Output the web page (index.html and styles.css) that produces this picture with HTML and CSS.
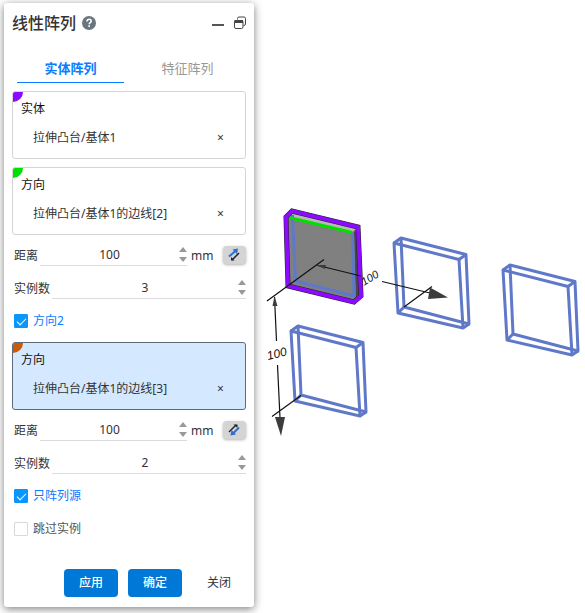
FILE: index.html
```
<!DOCTYPE html>
<html lang="zh-CN">
	<head>
		<meta charset="UTF-8">
		<title>线性阵列</title>
		<link rel="stylesheet" href="styles.css">
	</head>
	<body>
		<div class="app">
			<form class="panel">
				<div class="header">
					<h1>线性阵列</h1>
					<button type="button" class="icon-btn help" aria-label="帮助">
						<svg width="14" height="14" viewBox="0 0 14 14"><circle cx="7" cy="7" r="7" fill="#6b7580"/><path d="M5 5.4C5 4 6 3.3 7.1 3.3S9.2 4 9.2 5.2C9.2 6.6 7.2 6.7 7.2 8.3" fill="none" stroke="#fff" stroke-width="1.6"/><rect x="6.3" y="9.3" width="1.7" height="1.6" fill="#fff"/></svg>
					</button>
					<button type="button" class="icon-btn min" aria-label="最小化">
						<svg width="12" height="14" viewBox="0 0 12 14"><path d="M0 9h12" stroke="#555" stroke-width="2"/></svg>
					</button>
					<button type="button" class="icon-btn" aria-label="还原">
						<svg width="12" height="14" viewBox="0 0 12 14" fill="none" stroke="#444"><path d="M3.5 3.5V2.5Q3.500 1 5 1H10Q11.500 1 11.500 2.500V8Q11.500 9.500 9.500 9.500"/><rect x=".5" y="4.500" width="8.500" height="8" rx="1.500"/><path d="M.5 5.500h8.500" stroke-width="3"/></svg>
					</button>
				</div>
				<div class="tabs">
					<button type="button" class="tab active">实体阵列</button>
					<button type="button" class="tab">特征阵列</button>
				</div>

				<div class="pick">
					<span class="mark purple"></span>
					<div class="pick-title">实体</div>
					<div class="pick-item"><span>拉伸凸台/基体1</span><button type="button" class="del" aria-label="删除">×</button></div>
				</div>
				<div class="pick">
					<span class="mark green"></span>
					<div class="pick-title">方向</div>
					<div class="pick-item"><span>拉伸凸台/基体1的边线[2]</span><button type="button" class="del" aria-label="删除">×</button></div>
				</div>

				<div class="fields">
					<div class="row">
						<label for="dist1">距离</label>
						<div class="num">
							<input type="text" id="dist1" value="100">
							<span class="spin"><button type="button" class="up" aria-label="增加"></button><button type="button" class="down" aria-label="减少"></button></span>
						</div>
						<span class="unit">mm</span>
						<button type="button" class="flip" aria-label="反向">
							<svg width="13" height="14" viewBox="0 0 13 14"><path d="M1 8.500L7.500 3" stroke="#2a6fd0" stroke-width="2"/><path d="M4.500 1.500L10 .5L9 6z" fill="#2a6fd0"/><path d="M11 5L4 12" stroke="#222" stroke-width="1.500"/><path d="M3 9V12.500H6.500z" fill="#222"/></svg>
						</button>
					</div>
					<div class="row">
						<label for="count1">实例数</label>
						<div class="num">
							<input type="text" id="count1" value="3">
							<span class="spin"><button type="button" class="up" aria-label="增加"></button><button type="button" class="down" aria-label="减少"></button></span>
						</div>
					</div>
					<label class="check"><input type="checkbox" checked><span>方向2</span></label>
				</div>

				<div class="pick current">
					<span class="mark orange"></span>
					<div class="pick-title">方向</div>
					<div class="pick-item"><span>拉伸凸台/基体1的边线[3]</span><button type="button" class="del" aria-label="删除">×</button></div>
				</div>

				<div class="fields">
					<div class="row">
						<label for="dist2">距离</label>
						<div class="num">
							<input type="text" id="dist2" value="100">
							<span class="spin"><button type="button" class="up" aria-label="增加"></button><button type="button" class="down" aria-label="减少"></button></span>
						</div>
						<span class="unit">mm</span>
						<button type="button" class="flip" aria-label="反向">
							<svg width="13" height="14" viewBox="0 0 13 14"><path d="M1 9L8 2" stroke="#222" stroke-width="1.500"/><path d="M5.500 1.500H9.500V5z" fill="#222"/><path d="M11 4.500L5.500 10" stroke="#2a6fd0" stroke-width="2"/><path d="M3.500 7L2.500 12.500L8 11.500z" fill="#2a6fd0"/></svg>
						</button>
					</div>
					<div class="row">
						<label for="count2">实例数</label>
						<div class="num">
							<input type="text" id="count2" value="2">
							<span class="spin"><button type="button" class="up" aria-label="增加"></button><button type="button" class="down" aria-label="减少"></button></span>
						</div>
					</div>
					<label class="check"><input type="checkbox" checked><span>只阵列源</span></label>
					<label class="check"><input type="checkbox"><span>跳过实例</span></label>
				</div>

				<div class="footer">
					<button type="button" class="btn primary">应用</button>
					<button type="button" class="btn primary">确定</button>
					<button type="button" class="btn">关闭</button>
				</div>
			</form>

			<svg class="view" viewBox="254 0 331 613" preserveAspectRatio="xMinYMin meet">
				<defs>
					<!-- 线框 -->
					<g id="frame" fill="none" stroke="#6078c8" stroke-width="3" stroke-linejoin="round">
						<path d="M0 0L65 16.500L69 85L4 70Z"/>
						<path d="M7 -5L72 11.500L75 81L10 64Z"/>
						<path d="M0 0L7 -5M65 16.500L72 11.500M69 85L75 81M4 70L10 64"/>
					</g>
				</defs>
				<!-- 源实体 -->
				<path d="M286 217L292 211L358 227L361 296L354 302L288 286Z" fill="#808080"/>
				<path d="M288 217L293 213L357 228L352 232Z" fill="#b8b8b8"/>
				<path d="M354 232L358 228L360 296L356 300Z" fill="#484848"/>
				<path d="M292.500 215L295.500 281L354 296M352.500 233L354 297" fill="none" stroke="#6078c8" stroke-width="3"/>
				<path d="M289 217.500L352 232.500" stroke="#00e000" stroke-width="3"/>
				<path d="M286 217L292 211L358 227L361 296L354 302L288 286Z" fill="none" stroke="#222" stroke-width="5"/>
				<path d="M286 217L292 211L358 227L361 296L354 302L288 286Z" fill="none" stroke="#8c0aff" stroke-width="4"/>
				<use href="#frame" x="394" y="243"/>
				<use href="#frame" x="503" y="270"/>
				<use href="#frame" x="291" y="331"/>
				<!-- 尺寸标注 -->
				<g stroke="#111" stroke-width="1.200" fill="none">
					<path d="M267 301L324 259.500M316 265L361 276M382 281.500L432 293.500M404 307L432 286.500"/>
					<path d="M274.500 297L276.500 341M277.500 365L280 418M272 416.500L301 395.500"/>
				</g>
				<g fill="#3c3c3c">
					<path d="M430 287.500L448 297.500L428 299Z"/>
					<path d="M275 417H285L281 436Z"/>
					<path d="M316 265L326 265L325 269Z"/>
					<path d="M274.500 296L272.500 306H277.500Z"/>
				</g>
				<text class="dim" transform="translate(268 360) rotate(-14)">100</text>
				<text class="dim small" transform="translate(364 286) rotate(-32)">100</text>
			</svg>
		</div>
	</body>
</html>
```
FILE: styles.css
```
* {margin: 0; padding: 0; box-sizing: border-box;}
body {
	background: #fff;
	color: #333;
	font: 12px/18px "Noto Sans", "Noto Sans CJK SC", sans-serif;
}
button, input {
	font: inherit;
	color: inherit;
	border: none;
	background: none;
}
button {cursor: pointer;}
.app {
	display: flex;
	align-items: flex-start;
}
.panel {
	flex: 0 0 250px;
	min-width: 0;
	margin: 3px 0 0 4px;
	padding: 0 8px 10px;
	background: #fff;
	border-radius: 3px;
	box-shadow: 0 2px 8px rgba(0, 0, 0, 0.5);
}
.view {
	flex: 1;
	min-width: 0;
	display: block;
}

.header {
	display: flex;
	align-items: center;
	height: 40px;
}
.header h1 {
	font-size: 16px;
	font-weight: 500;
}
.icon-btn {
	display: flex;
	margin-left: 10px;
}
.icon-btn.help {margin-left: 6px;}
.icon-btn.min {margin-left: auto;}

.tabs {
	display: flex;
	gap: 10px;
	padding: 10px 5px 8px;
}
.tab {
	flex: 1;
	height: 30px;
	font-size: 13px;
	color: #999;
	border-bottom: 1px solid transparent;
}
.tab.active {
	color: #0a7cff;
	font-weight: bold;
	border-color: #0a7cff;
}

.pick {
	position: relative;
	height: 68px;
	padding: 8px 8px 0;
	border: 1px solid #d4d4d4;
	border-radius: 3px;
	overflow: hidden;
}
.pick + .pick {margin-top: 8px;}
.pick.current {
	margin-top: 10px;
	background: #d4e9ff;
	border-color: #5f6b78;
}
.mark {
	position: absolute;
	left: 0; top: 0;
	width: 10px; height: 10px;
	border-bottom-right-radius: 10px;
}
.purple {background: #8c0aff;}
.green {background: #00e000;}
.orange {background: #c85a0a;}
.pick-title {color: #111;}
.pick-item {
	display: flex;
	justify-content: space-between;
	margin-top: 11px;
	padding: 0 12px;
}
.del {
	width: 9px;
	line-height: 18px;
}

.fields {
	display: flex;
	flex-direction: column;
	gap: 11px;
	padding: 9px 0 0 2px;
}
.row {
	display: flex;
	align-items: center;
	gap: 2px;
	height: 22px;
}
.row label {
	flex: none;
	padding-top: 2px;
}
.num {
	flex: 1;
	display: flex;
	min-width: 0;
	height: 22px;
	border-bottom: 1px solid #dcdce0;
}
.num input {
	flex: 1;
	width: 0;
	min-width: 0;
	text-align: center;
	outline: none;
}
.spin {
	display: flex;
	flex-direction: column;
	justify-content: center;
	gap: 5px;
}
.up, .down {
	border-left: 4px solid transparent;
	border-right: 4px solid transparent;
}
.up {border-bottom: 5px solid #999;}
.down {border-top: 5px solid #999;}
.unit {
	flex: none;
	width: 32px;
	padding: 2px 0 0 2px;
}
.flip {
	flex: none;
	display: flex;
	align-items: center;
	justify-content: center;
	width: 23px;
	height: 18px;
	background: #d4d4d4;
	border-radius: 4px;
	box-shadow: 0 1px 3px rgba(0, 0, 0, 0.3);
}

.check {
	display: flex;
	align-items: center;
	gap: 5px;
	height: 22px;
	color: #555;
}
.check input {
	appearance: none;
	width: 14px;
	height: 14px;
	border: 1px solid #d8d8e0;
	border-radius: 1px;
}
.check input:checked {
	border-color: #0a96ff;
	background: #0a96ff;
}
.check input:checked::before {
	content: "";
	display: block;
	width: 8px;
	height: 4px;
	margin: 3px 0 0 2px;
	border: solid #fff;
	border-width: 0 0 1px 1px;
	transform: rotate(-45deg);
}
.check input:checked + span {color: #0a7cff;}

.footer {
	display: flex;
	justify-content: flex-end;
	gap: 10px;
	margin-top: 29px;
}
.btn {
	width: 54px;
	height: 28px;
	border-radius: 4px;
}
.btn.primary {
	color: #fff;
	font-weight: 500;
	background: #0078d8;
}

.dim {
	font: italic 12px "Liberation Sans", sans-serif;
	fill: #111;
}
.dim.small {font-size: 11px;}
```
